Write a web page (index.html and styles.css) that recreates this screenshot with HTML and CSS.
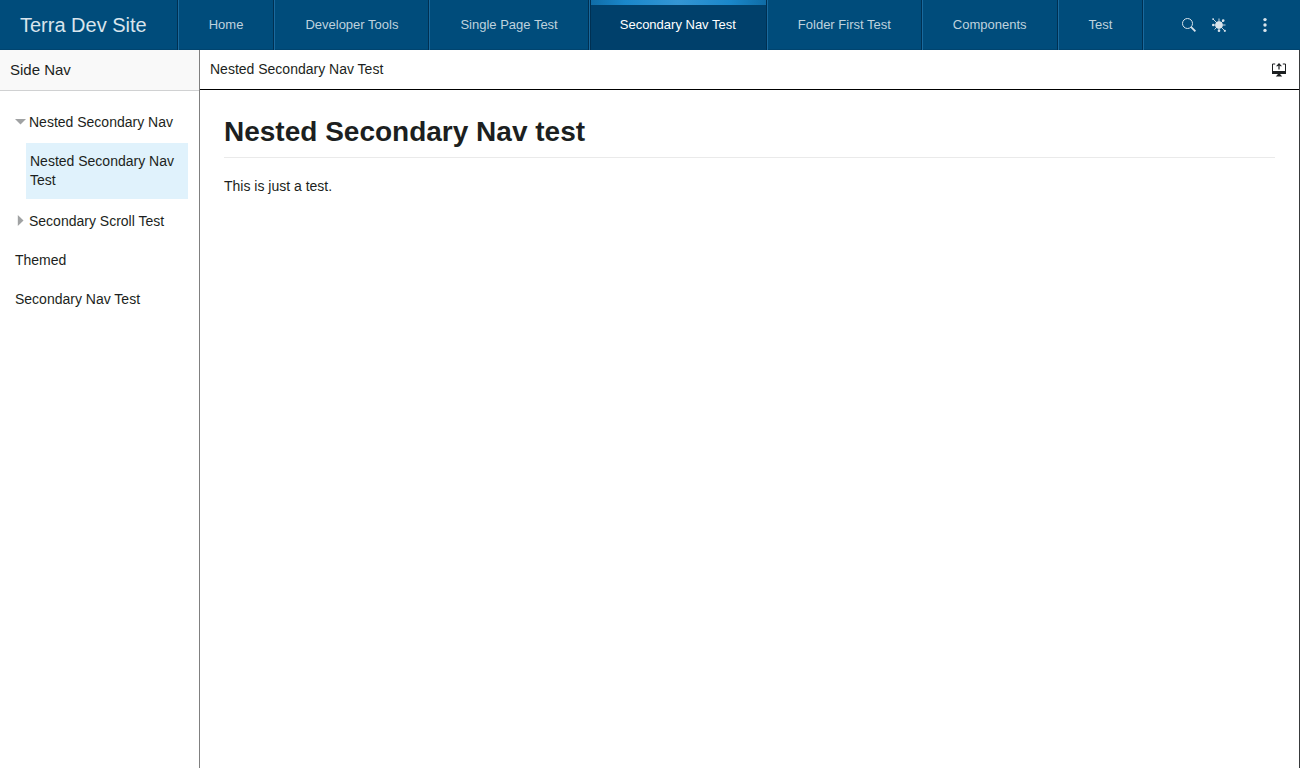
FILE: index.html
```html
<!DOCTYPE html>
<html lang="en">
<head>
<meta charset="utf-8">
<title>Terra Dev Site</title>
<link rel="stylesheet" href="styles.css">
</head>
<body>
<header class="app-header">
  <div class="app-title">Terra Dev Site</div>
  <nav class="tabs" aria-label="Primary">
    <a class="tab" href="#home">Home</a>
    <a class="tab" href="#developer-tools">Developer Tools</a>
    <a class="tab" href="#single-page">Single Page Test</a>
    <a class="tab tab-active" href="#secondary-nav" aria-current="page">Secondary Nav Test</a>
    <a class="tab" href="#folder-first">Folder First Test</a>
    <a class="tab" href="#components">Components</a>
    <a class="tab" href="#test">Test</a>
  </nav>
  <div class="utilities">
    <button class="icon-button" type="button" aria-label="Search">
      <svg class="icon" viewBox="0 0 14 14" fill="none" stroke="currentColor"><circle cx="5.5" cy="5.5" r="5"/><path d="M9.200 9.200l4.200 4.200" stroke-width="1.800"/></svg>
    </button>
    <button class="icon-button" type="button" aria-label="Extensions">
      <svg class="icon" viewBox="0 0 14 14" fill="currentColor"><circle cx="7" cy="7" r="3.800"/><path d="M7 .5v12.500M1 7h12.500M.8.8l12.400 12.400M11.200 2.800L2.500 11.500" stroke="currentColor" stroke-width=".9"/><circle cx="11.200" cy="2.600" r="1.300"/><circle cx="1.200" cy="7" r="1.200"/><circle cx="7" cy="12.700" r="1.300"/><circle cx="1.200" cy="1.200" r=".9"/><circle cx="12.800" cy="12.800" r="1.100"/></svg>
    </button>
    <button class="icon-button menu-button" type="button" aria-label="Menu">
      <svg class="icon" viewBox="0 0 14 14" fill="currentColor"><circle cx="7" cy="1.600" r="1.700"/><circle cx="7" cy="7" r="1.700"/><circle cx="7" cy="12.400" r="1.700"/></svg>
    </button>
  </div>
</header>
<div class="workspace">
  <aside class="side">
    <div class="side-header">Side Nav</div>
    <nav aria-label="Side">
      <ul class="side-list">
        <li class="side-group"><a class="side-link" href="#nested"><svg class="caret" viewBox="0 0 11 11"><path d="M0 2h11L5.500 7.500z"/></svg>Nested Secondary Nav</a>
          <ul class="side-sublist">
            <li><a class="side-link side-link-active" href="#nested-test" aria-current="page">Nested Secondary Nav Test</a></li>
          </ul>
        </li>
        <li><a class="side-link" href="#scroll"><svg class="caret" viewBox="0 0 11 11"><path d="M2.800 -1v11L8.500 4.500z"/></svg>Secondary Scroll Test</a></li>
        <li><a class="side-link" href="#themed">Themed</a></li>
        <li><a class="side-link" href="#secondary">Secondary Nav Test</a></li>
      </ul>
    </nav>
  </aside>
  <main class="main">
    <div class="main-header">
      <span>Nested Secondary Nav Test</span>
      <button class="icon-button" type="button" aria-label="Open in full page">
        <svg class="icon" viewBox="0 0 14 14" fill="currentColor"><path d="M0 8h14v3H0z"/><path d="M6 11h2l2.200 2.500H3.800z"/><path d="M3.200 1H.5v7M10.800 1h2.700v7" fill="none" stroke="currentColor"/><path d="M6.400 2h1.200v4.500H6.400zM7 0l3 3.300H8.500L7 2 5.500 3.300H4z"/></svg>
      </button>
    </div>
    <article class="content">
      <h1>Nested Secondary Nav test</h1>
      <p>This is just a test.</p>
    </article>
  </main>
</div>
</body>
</html>
```
FILE: styles.css
```css
* {
  box-sizing: border-box;
}

body {
  margin: 0;
  min-height: 100vh;
  display: flex;
  flex-direction: column;
  color: #1c1f21;
  background: #fff;
  font: 14px/19px "Liberation Sans", Arial, sans-serif;
}

a {
  color: inherit;
  text-decoration: none;
}

.app-header {
  display: flex;
  height: 50px;
  color: #d9e4ec;
  background: #004c7b;
  box-shadow: inset 0 -1px #00446f;
}

.app-title {
  display: flex;
  align-items: center;
  padding: 0 30px 0 20px;
  border-right: 1px solid #003052;
  font-size: 20px;
  white-space: nowrap;
}

.tabs {
  display: flex;
  border-right: 1px solid #1a6a9e;
}

.tab {
  display: flex;
  align-items: center;
  padding: 0 30px 2px;
  border-left: 1px solid #1a6a9e;
  border-right: 1px solid #003052;
  color: #bfd2de;
  font-size: 13px;
  white-space: nowrap;
}

.tab-active {
  color: #fff;
  background: linear-gradient(90deg, #0f6ca6, #1a87ca 20%, #3496d4 50%, #1a87ca 80%, #0f6ca6) top / 100% 5px no-repeat #00406b;
  box-shadow: inset 1px 0 #003052;
}

.utilities {
  display: flex;
  align-items: center;
  gap: 16px;
  margin-left: auto;
  padding-right: 28px;
}

.icon-button {
  display: flex;
  padding: 0;
  border: 0;
  color: inherit;
  background: none;
}

.menu-button {
  margin-left: 16px;
}

.icon {
  width: 14px;
  height: 14px;
  overflow: visible;
}

.workspace {
  display: flex;
  flex: 1;
}

.side {
  flex: 0 0 200px;
  border-right: 1px solid #808080;
}

.side-header {
  padding: 10px;
  line-height: 20px;
  border-bottom: 1px solid #d0d1d2;
  background: #f9f9f9;
  font-size: 15px;
}

.side-list,
.side-sublist {
  display: flex;
  flex-direction: column;
  gap: 2px;
  margin: 0;
  padding: 0;
  list-style: none;
}

.side-list {
  padding: 13px 11px;
}

.side-sublist {
  margin: 2px 0 1px 15px;
}

.side-link {
  display: flex;
  align-items: center;
  gap: 3px;
  padding: 9px 4px;
}

.side-link-active {
  background: #e0f2fc;
}

.side-group {
  margin-bottom: 1px;
}

.caret {
  flex: none;
  width: 11px;
  height: 11px;
  overflow: visible;
  fill: #a0a2a3;
}

.main {
  flex: 1;
  border-right: 1px solid #383a3c;
}

.main-header {
  display: flex;
  align-items: center;
  justify-content: space-between;
  height: 40px;
  padding: 0 13px 0 10px;
  border-bottom: 1px solid #000;
}

.content {
  padding: 24px;
}

.content h1 {
  margin: 0 0 19px;
  padding-bottom: 8px;
  border-bottom: 1px solid #eaeaea;
  font-size: 28px;
  line-height: 35px;
}

.content p {
  margin: 0;
}
```
